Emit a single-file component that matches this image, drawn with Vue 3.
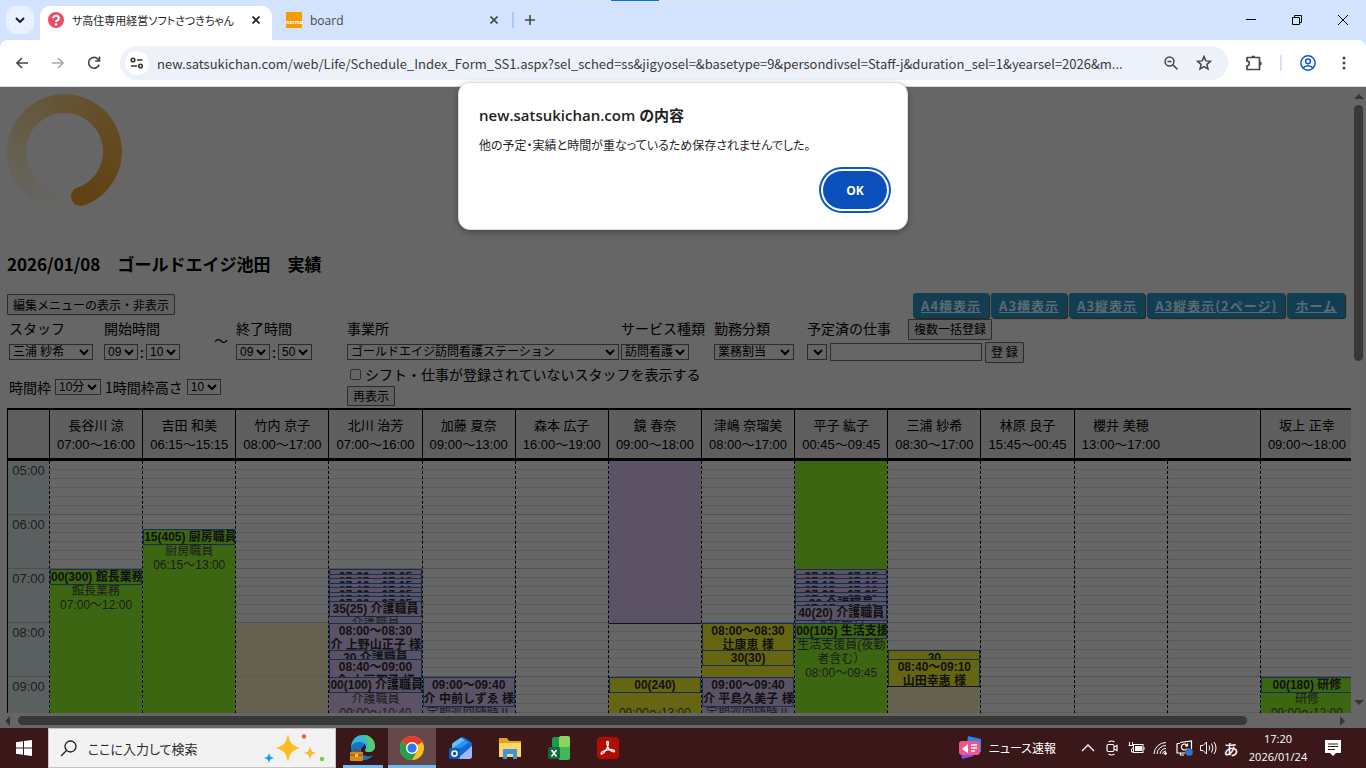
<script setup>
import { ref } from 'vue'

const SLOTS = 28
const PX_PER_MINUTE = 0.9

const url = ref('new.satsukichan.com/web/Life/Schedule_Index_Form_SS1.aspx?sel_sched=ss&jigyosel=&basetype=9&persondivsel=Staff-j&duration_sel=1&yearsel=2026&m...')
const dialogOpen = ref(true)
const search = ref('')

const printLinks = ['A4横表示', 'A3横表示', 'A3縦表示', 'A3縦表示(2ページ)', 'ホーム']
const hours = ['05:00', '06:00', '07:00', '08:00', '09:00']

const heads = [
  { name: '長谷川 涼', time: '07:00～16:00' },
  { name: '吉田 和美', time: '06:15～15:15' },
  { name: '竹内 京子', time: '08:00～17:00' },
  { name: '北川 治芳', time: '07:00～16:00' },
  { name: '加藤 夏奈', time: '09:00～13:00' },
  { name: '森本 広子', time: '16:00～19:00' },
  { name: '鏡 春奈', time: '09:00～18:00' },
  { name: '津嶋 奈瑠美', time: '08:00～17:00' },
  { name: '平子 紘子', time: '00:45～09:45' },
  { name: '三浦 紗希', time: '08:30～17:00' },
  { name: '林原 良子', time: '15:45～00:45' },
  { name: '櫻井 美穂', time: '13:00～17:00', span: 2 },
  { name: '坂上 正幸', time: '09:00～18:00' },
]

// from / to are minutes after 05:00
function ev(from, to, color, title = [], body = []) {
  return { from, to, color, title, body }
}

function shortVisits(count) {
  return Array.from({ length: count }, (_, i) => {
    const a = String(i * 5).padStart(2, '0')
    const b = String(i * 5 + 5).padStart(2, '0')
    return ev(120 + i * 5, 125 + i * 5, 'purple', [`07:${a}～07:${b}`])
  })
}

const lanes = [
  [ev(120, 420, 'green', ['00(300) 館長業務'], ['館長業務', '07:00～12:00'])],
  [ev(75, 480, 'green', ['15(405) 厨房職員'], ['厨房職員', '06:15～13:00'])],
  [ev(180, 480, 'shift')],
  [
    ...shortVisits(7),
    ev(155, 180, 'purple', ['35(25) 介護職員'], ['介護職員']),
    ev(180, 210, 'purple', ['08:00～08:30', '介 上野山正子 様']),
    ev(210, 220, 'purple', ['30 介護職員']),
    ev(220, 240, 'purple', ['08:40～09:00', '介 大戸都子 様']),
    ev(240, 340, 'purple', ['00(100) 介護職員'], ['介護職員', '09:00～10:40']),
  ],
  [ev(240, 290, 'purple', ['09:00～09:40', '介 中前しずゑ 様'], ['定期巡回随時Ⅱ'])],
  [],
  [
    ev(0, 180, 'purple closed'),
    ev(240, 480, 'yellow', ['00(240)'], ['\u00a0', '09:00～13:00']),
  ],
  [
    ev(180, 210, 'yellow', ['08:00～08:30', '辻康恵 様']),
    ev(210, 240, 'yellow', ['30(30)']),
    ev(240, 290, 'purple', ['09:00～09:40', '介 平島久美子 様'], ['定期巡回随時Ⅱ']),
  ],
  [
    ev(0, 120, 'green'),
    ...shortVisits(6),
    ev(150, 155, 'purple', ['30 介護職員']),
    ev(155, 160, 'purple', ['07:35～07:40']),
    ev(160, 180, 'purple', ['40(20) 介護職員'], ['介護職員']),
    ev(180, 285, 'green', ['00(105) 生活支援員'], ['生活支援員(夜勤者含む）', '08:00～09:45']),
  ],
  [
    ev(250, 480, 'shift'),
    ev(210, 220, 'yellow', ['30']),
    ev(220, 250, 'yellow closed', ['08:40～09:10', '山田幸惠 様']),
  ],
  [],
  [],
  [],
  [ev(240, 420, 'green', ['00(180) 研修'], ['研修', '09:00～12:00'])],
]

function place(e) {
  const top = Math.round(e.from * PX_PER_MINUTE)
  const bottom = Math.round(e.to * PX_PER_MINUTE)
  return { top: `${top}px`, height: `${bottom - top + 1}px` }
}
</script>

<template>
  <div class="screen">
    <header class="browser">
      <div class="strip">
        <button class="tab-search" aria-label="タブを検索">
          <svg width="10" height="6" viewBox="0 0 10 6"><path d="M1 1l4 4 4-4" fill="none" stroke="#1f1f1f" stroke-width="2" /></svg>
        </button>
        <div class="tab active">
          <svg width="16" height="16" viewBox="0 0 16 16">
            <circle cx="8" cy="8" r="8" fill="#ec4b64" />
            <path d="M5.2 6.2a2.8 2.5 0 1 1 4 2.2c-.9.5-1.2.8-1.2 1.7" fill="none" stroke="#fff" stroke-width="2" />
            <circle cx="8" cy="12.4" r="1.2" fill="#fff" />
          </svg>
          <span class="tab-title jp">サ高住専用経営ソフトさつきちゃん</span>
          <button class="icon" aria-label="閉じる">
            <svg width="8" height="8" viewBox="0 0 8 8"><path d="M0.5 0.5l7 7M7.5 0.5l-7 7" stroke="#1f1f1f" stroke-width="1.6" /></svg>
          </button>
        </div>
        <div class="tab">
          <span class="favicon">norma</span>
          <span class="tab-title">board</span>
          <button class="icon" aria-label="閉じる">
            <svg width="8" height="8" viewBox="0 0 8 8"><path d="M0.5 0.5l7 7M7.5 0.5l-7 7" stroke="#474747" stroke-width="1.6" /></svg>
          </button>
        </div>
        <i class="bar"></i>
        <button class="icon plus" aria-label="新しいタブ">
          <svg width="10" height="10" viewBox="0 0 10 10"><path d="M5 0v10M0 5h10" stroke="#474747" stroke-width="1.6" /></svg>
        </button>
        <div class="window-buttons">
          <button class="icon" aria-label="最小化"><svg width="10" height="10" viewBox="0 0 10 10"><path d="M0 4.5h10" stroke="#000" /></svg></button>
          <button class="icon" aria-label="元に戻す">
            <svg width="10" height="10" viewBox="0 0 10 10"><path d="M0.5 2.5h7v7h-7zM2.5 2.5v-2h7v7h-2" fill="none" stroke="#000" /></svg>
          </button>
          <button class="icon" aria-label="閉じる"><svg width="10" height="10" viewBox="0 0 10 10"><path d="M0 0l10 10M10 0L0 10" stroke="#000" /></svg></button>
        </div>
      </div>

      <div class="toolbar">
        <button class="icon nav" aria-label="戻る">
          <svg width="12" height="12" viewBox="0 0 12 12"><path d="M12 6H1M6 1L1 6l5 5" fill="none" stroke="#474747" stroke-width="1.6" /></svg>
        </button>
        <button class="icon nav" aria-label="進む">
          <svg width="12" height="12" viewBox="0 0 12 12"><path d="M0 6h11M6 1l5 5-5 5" fill="none" stroke="#a8a8a8" stroke-width="1.6" /></svg>
        </button>
        <button class="icon nav" aria-label="再読み込み">
          <svg width="14" height="14" viewBox="0 0 14 14"><path d="M12.1 8.6A5.4 5.4 0 1 1 11 3.2L12.4 5M12.5 0.6V5H8.1" fill="none" stroke="#474747" stroke-width="1.7" /></svg>
        </button>
        <div class="omnibox">
          <button class="icon site" aria-label="サイト情報">
            <svg width="14" height="12" viewBox="0 0 14 12" fill="none" stroke="#333" stroke-width="1.6"><circle cx="3" cy="3" r="1.8" /><path d="M7 3h5.5M1 9h6" /><circle cx="10.5" cy="9" r="1.8" /></svg>
          </button>
          <input v-model="url" class="url" type="text" aria-label="アドレス" />
          <button class="icon" aria-label="ズーム">
            <svg width="14" height="14" viewBox="0 0 14 14" fill="none" stroke="#474747" stroke-width="1.5"><circle cx="5.5" cy="5.5" r="4.4" /><path d="M8.8 8.8l4.6 4.6M3.5 5.5h4" /></svg>
          </button>
          <button class="icon" aria-label="ブックマーク">
            <svg width="16" height="16" viewBox="0 0 16 16"><path d="M8 1.6l1.8 4.3 4.7.4-3.6 3 1.1 4.6L8 11.5l-4 2.4 1.1-4.6-3.6-3 4.7-.4z" fill="none" stroke="#474747" stroke-width="1.5" /></svg>
          </button>
        </div>
        <button class="icon ext" aria-label="拡張機能">
          <svg width="18" height="18" viewBox="0 0 18 18"><path d="M2 3.5h12.5v12H2v-3.7a2.3 2.3 0 0 0 0-4.6z" fill="none" stroke="#474747" stroke-width="1.7" stroke-linejoin="round" /><path d="M6.2 3.4a2 2 0 0 1 4 0zM14.8 7.5a2 2 0 0 1 0 4z" fill="#474747" /></svg>
        </button>
        <i class="bar"></i>
        <button class="icon ext" aria-label="プロフィール">
          <svg width="16" height="16" viewBox="0 0 16 16" fill="none" stroke="#0b57d0" stroke-width="1.5"><circle cx="8" cy="8" r="7.2" /><circle cx="8" cy="6.3" r="2.4" /><path d="M3 13c2.5-3 7.5-3 10 0" /></svg>
        </button>
        <button class="icon ext" aria-label="メニュー">
          <svg width="4" height="14" viewBox="0 0 4 14" fill="#474747"><circle cx="2" cy="2" r="1.5" /><circle cx="2" cy="7" r="1.5" /><circle cx="2" cy="12" r="1.5" /></svg>
        </button>
      </div>
      <div class="share"><i></i></div>
    </header>

    <main class="viewport">
      <div class="page">
        <div class="spinner"></div>
        <h1>2026/01/08　ゴールドエイジ池田　実績</h1>

        <div class="actions">
          <button class="btn">編集メニューの表示・非表示</button>
          <nav>
            <a v-for="link in printLinks" :key="link" href="#">{{ link }}</a>
          </nav>
        </div>

        <form class="filters" @submit.prevent>
          <div class="left">
            <div class="fields">
              <div class="field staff">
                <label for="staff">スタッフ</label>
                <div class="row"><select id="staff" class="w84"><option>三浦 紗希</option></select></div>
              </div>
              <div class="field time">
                <label for="start-h">開始時間</label>
                <div class="row">
                  <select id="start-h" class="w34"><option>09</option></select>
                  <span class="colon">:</span>
                  <select class="w34" aria-label="開始分"><option>10</option></select>
                </div>
              </div>
              <span class="wave">～</span>
              <div class="field">
                <label for="end-h">終了時間</label>
                <div class="row">
                  <select id="end-h" class="w34"><option>09</option></select>
                  <span class="colon">:</span>
                  <select class="w34" aria-label="終了分"><option>50</option></select>
                </div>
              </div>
            </div>
            <div class="row frame">
              <label for="slot">時間枠</label>
              <select id="slot" class="w46"><option>10分</option></select>
              <label for="height">1時間枠高さ</label>
              <select id="height" class="w34"><option>10</option></select>
            </div>
          </div>

          <div class="right">
            <div class="fields">
              <div class="field office">
                <label for="office">事業所</label>
                <div class="row"><select id="office" class="w272"><option>ゴールドエイジ訪問看護ステーション</option></select></div>
              </div>
              <div class="field kind">
                <label for="service">サービス種類</label>
                <div class="row"><select id="service" class="w68"><option>訪問看護</option></select></div>
              </div>
              <div class="field kind">
                <label for="work">勤務分類</label>
                <div class="row"><select id="work" class="w80"><option>業務割当</option></select></div>
              </div>
              <div class="field">
                <div class="row job">
                  <label for="job">予定済の仕事</label>
                  <button class="btn">複数一括登録</button>
                </div>
                <div class="row gap">
                  <select id="job" class="w20"><option></option></select>
                  <input class="text" type="text" aria-label="仕事の内容" />
                  <button class="btn">登 録</button>
                </div>
              </div>
            </div>
            <label class="check"><input type="checkbox" />シフト・仕事が登録されていないスタッフを表示する</label>
            <button class="btn reload">再表示</button>
          </div>
        </form>

        <table class="schedule">
          <thead>
            <tr>
              <th class="hour-col"></th>
              <th v-for="h in heads" :key="h.name" :colspan="h.span || 1">
                <div :class="{ half: h.span }">{{ h.name }}<br />{{ h.time }}</div>
              </th>
            </tr>
          </thead>
          <tbody>
            <tr>
              <td class="hour-col">
                <div class="hours">
                  <div v-for="h in hours" :key="h" class="hour">{{ h }}</div>
                </div>
              </td>
              <td v-for="(lane, i) in lanes" :key="i">
                <div class="lane">
                  <div v-for="n in SLOTS" :key="n" class="slot"></div>
                  <div v-for="(e, k) in lane" :key="k" class="event" :class="e.color" :style="place(e)">
                    <div v-if="e.title.length" class="event-title">
                      <div v-for="t in e.title" :key="t">{{ t }}</div>
                    </div>
                    <div v-for="t in e.body" :key="t">{{ t }}</div>
                  </div>
                </div>
              </td>
            </tr>
          </tbody>
        </table>
      </div>

      <div class="vscroll">
        <svg width="10" height="5" viewBox="0 0 10 5"><path d="M0 5l5-5 5 5z" fill="#363636" /></svg>
        <div class="vtrack"><div class="vthumb"></div></div>
        <svg width="10" height="5" viewBox="0 0 10 5"><path d="M0 0l5 5 5-5z" fill="#363636" /></svg>
      </div>
      <div class="hscroll">
        <svg width="5" height="10" viewBox="0 0 5 10"><path d="M5 0L0 5l5 5z" fill="#363636" /></svg>
        <div class="htrack"><div class="hthumb"></div></div>
        <svg width="5" height="10" viewBox="0 0 5 10"><path d="M0 0l5 5-5 5z" fill="#363636" /></svg>
      </div>
    </main>

    <div v-if="dialogOpen" class="dialog" role="alertdialog" aria-labelledby="dialog-title">
      <h2 id="dialog-title" class="jp">new.satsukichan.com の内容</h2>
      <p class="jp">他の予定・実績と時間が重なっているため保存されませんでした。</p>
      <button @click="dialogOpen = false">OK</button>
    </div>

    <footer class="taskbar">
      <button class="task start" aria-label="スタート">
        <svg width="16" height="16" viewBox="0 0 16 16" fill="#fff"><path d="M0 2.2l7-1v6.3H0zM8 1.1L16 0v7.5H8zM0 8.5h7v6.3l-7-1zM8 8.5h8V16l-8-1.1z" /></svg>
      </button>
      <label class="search">
        <svg width="17" height="17" viewBox="0 0 17 17" fill="none" stroke="#1a1a1a" stroke-width="1.3"><circle cx="10.5" cy="6.5" r="5.5" /><path d="M6.5 10.5L1 16" /></svg>
        <input v-model="search" class="jp" type="text" placeholder="ここに入力して検索" />
        <svg width="62" height="30" viewBox="0 0 62 30">
          <path d="M24 1c2 9 3 11 12 14-9 3-10 5-12 14-2-9-3-11-12-14 9-3 10-5 12-14z" fill="#fbbc1c" />
          <path d="M46 13c1 5 2 6 6 7-4 1-5 2-6 7-1-5-2-6-6-7 4-1 5-2 6-7z" fill="#fcb92b" />
          <path d="M5 20c1 3 1 4 5 5-4 1-4 2-5 5-1-3-1-4-5-5 4-1 4-2 5-5z" fill="#159cec" />
          <circle cx="40" cy="3.5" r="2.2" fill="#ee6038" /><circle cx="58" cy="26" r="2.2" fill="#80c646" />
        </svg>
      </label>
      <button class="task open edge" aria-label="Edge">
        <svg width="26" height="28" viewBox="0 0 26 28">
          <path d="M13 1C5 1 1 7 1 14c0 7 5 12 12 12 5 0 8-2 10-5-6 3-12 0-12-5 0-2 1-3 3-4z" fill="#1574c8" />
          <path d="M1 13C2 5 7 1 13 1c8 0 12 6 12 11 0 4-3 6-6 6s-4-1-4-2c0-1 1-1 1-3 0-3-3-5-7-5-4 0-7 2-8 5z" fill="#39b7d6" />
          <path d="M14 1c7 0 11 6 11 11 0 4-3 6-6 6s-4-1-4-2c5 0 5-8-1-15z" fill="#50d06d" />
          <path d="M4 18v-2h5v2" fill="none" stroke="#7b4b10" stroke-width="1.5" /><rect x="0" y="18" width="13" height="9" rx="1" fill="#d98a1c" /><path d="M0 21h13" stroke="#7b4b10" /><rect x="5" y="20" width="3" height="3" fill="#f9c650" />
        </svg>
      </button>
      <button class="task open current" aria-label="Chrome">
        <svg width="24" height="24" viewBox="0 0 24 24">
          <circle cx="12" cy="12" r="12" fill="#fbc116" />
          <path d="M12 12L1.6 6A12 12 0 0 1 22.4 6z" fill="#e33b2e" /><path d="M12 0a12 12 0 0 1 10.4 6H12z" fill="#e33b2e" />
          <path d="M1.6 6A12 12 0 0 0 12 24l5.2-9L12 12z" fill="#22a04b" />
          <circle cx="12" cy="12" r="6" fill="#fff" /><circle cx="12" cy="12" r="4.6" fill="#3178e8" />
        </svg>
      </button>
      <button class="task" aria-label="Outlook">
        <svg width="24" height="24" viewBox="0 0 24 24">
          <path d="M3 9a3 3 0 0 1 1.5-2.5L12 1.5a3 3 0 0 1 3 0l7 4.5a3 3 0 0 1 1 2V20a3 3 0 0 1-3 3H3z" fill="#1668d4" />
          <path d="M3 9a3 3 0 0 1 1.5-2.5L12 1.5 16 4 3 13z" fill="#5cc4fb" /><path d="M16 4l4 2.5L3 18v-5z" fill="#2b94f0" />
          <path d="M23 10v10a3 3 0 0 1-3 3H8z" fill="#9db8ff" />
          <rect x="0" y="12" width="11" height="11" rx="2" fill="#1059b8" /><circle cx="5.5" cy="17.5" r="2.6" fill="none" stroke="#fff" stroke-width="1.5" />
        </svg>
      </button>
      <button class="task" aria-label="エクスプローラー">
        <svg width="22" height="22" viewBox="0 0 22 22"><path d="M0 1h8l2 3h12v15H0z" fill="#e5a21b" /><path d="M0 6h22v14H0z" fill="#fcd667" /><path d="M4 12h14v10h-4v-5H8v5H4z" fill="#3c94da" /></svg>
      </button>
      <button class="task" aria-label="Excel">
        <svg width="22" height="24" viewBox="0 0 22 24">
          <path d="M4 4a3 3 0 0 1 3-3h6v22H7a3 3 0 0 1-3-3z" fill="#1c9a52" /><rect x="11" y="0" width="11" height="12" rx="2" fill="#8ed35a" /><path d="M11 11h11v11a2 2 0 0 1-2 2h-9z" fill="#3fb75c" />
          <rect x="0" y="11" width="12" height="12" rx="2" fill="#0e6b3c" /><path d="M3.5 14l5 6.5M8.5 14l-5 6.5" stroke="#fff" stroke-width="1.6" />
        </svg>
      </button>
      <button class="task" aria-label="Acrobat">
        <svg width="22" height="22" viewBox="0 0 22 22"><rect width="22" height="22" rx="4" fill="#b30b00" /><path d="M10.5 4.5c2 0 .8 5-1.5 8.5-2.5 4-5 5-5 3.5s5-4 9-4c3 0 5 .8 4.5 2s-4-.3-5.5-2.5c-2-3-3-7.5-1.5-7.500z" fill="none" stroke="#fff" stroke-width="1.3" /></svg>
      </button>

      <div class="tray">
        <button class="news">
          <svg width="24" height="24" viewBox="0 0 24 24"><path d="M10 0l13 3v13H8z" fill="#1e88ee" /><path d="M2 10l2 13 12-3z" fill="#7b4df0" /><rect x="1" y="5" width="21" height="14" rx="3" fill="#f0568c" /><path d="M4 13l6-5v9z" fill="#fff" /><path d="M13 9h6M13 12h6M13 15h4" stroke="#fff" stroke-width="1.3" /></svg>
          <span class="jp">ニュース速報</span>
        </button>
        <button class="icon" aria-label="隠れているインジケーター"><svg width="14" height="8" viewBox="0 0 14 8"><path d="M1 7l6-6 6 6" fill="none" stroke="#fff" stroke-width="1.3" /></svg></button>
        <button class="icon" aria-label="会議"><svg width="12" height="16" viewBox="0 0 12 16" fill="none" stroke="#fff" stroke-width="1.2"><rect x="1" y="4.5" width="7" height="7" rx="1.5" /><path d="M8 7l3-1.5v5L8 9M2.5 2q3-2 6 0M2.5 14q3 2 6 0" /></svg></button>
        <button class="icon" aria-label="バッテリー"><svg width="17" height="12" viewBox="0 0 17 12"><rect x="5.5" y="2.5" width="9.5" height="8" fill="none" stroke="#fff" /><rect x="7" y="4" width="7" height="5" fill="#fff" /><path d="M16 5v3M1.5 0v3M4.5 0v3M0.5 3.5h5v2l-2 1.5v3h2" fill="none" stroke="#fff" /></svg></button>
        <button class="icon" aria-label="ネットワーク"><svg width="14" height="14" viewBox="0 0 14 14" fill="none" stroke="#fff"><path d="M1 13A12 12 0 0 1 13 1.5M4 13a9 9 0 0 1 9-8.5M7 13a6 6 0 0 1 6-5.5M9.5 13a3.5 3.5 0 0 1 3.5-3" /><circle cx="12.5" cy="12.5" r="1" fill="#fff" /></svg></button>
        <button class="icon" aria-label="更新"><svg width="17" height="16" viewBox="0 0 17 16"><path d="M9 13H4.5v2H8M1 3.5h3M1 3.5V13h3.5M4 2.5L15.5 1v8" fill="none" stroke="#fff" stroke-width="1.2" /><path d="M11 5.5a3 3 0 1 0 0 3M11.5 3.5V6H9" fill="none" stroke="#fff" stroke-width="1.2" /><circle cx="13" cy="12" r="3.8" fill="#3474c4" /></svg></button>
        <button class="icon" aria-label="音量"><svg width="17" height="14" viewBox="0 0 17 14" fill="none" stroke="#fff"><path d="M0.5 4.5H3L6.5 1v12L3 9.5H.5zM9 4.5q1.5 2.5 0 5M11.5 2.5q3 4.5 0 9M14 1q4 6 0 12" /></svg></button>
        <button class="ime">あ</button>
        <div class="clock"><div>17:20</div><div>2026/01/24</div></div>
        <button class="icon note" aria-label="通知"><svg width="16" height="16" viewBox="0 0 16 16"><path d="M0 0h16v13h-5l-3 3-3-3H0z" fill="#fff" /><path d="M3 4h10M3 6.5h10M3 9.5h7" stroke="#3a181a" /></svg></button>
      </div>
    </footer>
  </div>
</template>

<style>
body {
  margin: 0;
}
</style>

<style scoped>
.screen {
  position: relative;
  display: flex;
  flex-direction: column;
  min-height: 100vh;
  font-family: "Open Sans", "Noto Sans CJK JP", sans-serif;
  color: #000;
}

* {
  box-sizing: border-box;
}

button {
  font-family: inherit;
  cursor: pointer;
}

svg {
  display: block;
  flex: none;
}

.jp {
  font-feature-settings: "palt";
}

.icon {
  display: flex;
  align-items: center;
  justify-content: center;
  border: 0;
  padding: 0;
  background: none;
}

/* browser */
.browser {
  position: relative;
  background: #d3e3fd;
}

.strip {
  display: flex;
  align-items: center;
  height: 40px;
  padding-left: 6px;
}

.tab-search {
  display: flex;
  align-items: center;
  justify-content: center;
  width: 28px;
  height: 28px;
  margin-right: 6px;
  border: 0;
  border-radius: 10px;
  background: #e9f0fe;
}

.tab {
  display: flex;
  align-items: center;
  width: 232px;
  height: 34px;
  margin-top: 6px;
  padding: 0 12px 6px 8px;
  gap: 8px;
  font-size: 12px;
  color: #474747;
}

.tab.active {
  background: #fff;
  border-radius: 10px 10px 0 0;
  color: #1f1f1f;
}

.tab.active .tab-title {
  font-size: 11px;
}

.tab:not(.active) {
  width: 240px;
  padding-left: 14px;
  padding-right: 14px;
}

.tab-title {
  flex: 1;
  white-space: nowrap;
}

.favicon {
  width: 16px;
  height: 16px;
  background: #f59b00;
  color: #fff;
  font-size: 5px;
  font-weight: 700;
  line-height: 20px;
  text-align: center;
}

.bar {
  width: 2px;
  height: 16px;
  background: #a8c7fa;
}

.plus {
  margin-left: 11px;
}

.window-buttons {
  display: flex;
  margin-left: auto;
}

.window-buttons .icon {
  width: 46px;
  height: 40px;
}

.toolbar {
  display: flex;
  align-items: center;
  height: 47px;
  padding: 0 4px;
  background: #fff;
  border-bottom: 1px solid #d9dbe0;
  border-radius: 8px 8px 0 0;
}

.nav {
  width: 36px;
  height: 34px;
}

.omnibox {
  display: flex;
  flex: 1;
  align-items: center;
  height: 34px;
  margin: 0 8px;
  padding: 0 16px 0 5px;
  gap: 18px;
  background: #edf1fa;
  border-radius: 17px;
}

.site {
  width: 24px;
  height: 24px;
  border-radius: 50%;
  background: #fff;
}

.url {
  flex: 1;
  min-width: 0;
  margin-left: -10px;
  border: 0;
  padding: 0;
  outline: 0;
  background: none;
  font-family: "Noto Sans CJK JP", sans-serif;
  font-size: 13px;
  color: #3a3a3a;
}

.ext {
  width: 36px;
}

.toolbar .bar {
  margin: 0 8px;
  background: #d3e3fd;
}

.share {
  position: absolute;
  top: 0;
  left: 50%;
  width: 240px;
  height: 1px;
  margin-left: -120px;
  background: #e4e4e4;
}

.share i {
  display: block;
  width: 48px;
  height: 1px;
  margin-left: 48px;
  background: #0078d4;
}

/* page */
.viewport {
  display: grid;
  flex: 1;
  grid-template-columns: minmax(0, 1fr) 15px;
  grid-template-rows: 1fr 15px;
  background: #666;
}

.page {
  overflow: hidden;
  padding: 7px 0 0 7px;
  font-family: "Noto Sans CJK JP", sans-serif;
  font-size: 14px;
}

.spinner {
  position: relative;
  width: 115px;
  height: 115px;
}

.spinner::before {
  content: "";
  display: block;
  width: 115px;
  height: 115px;
  border-radius: 50%;
  background: conic-gradient(from 180deg, #666 0deg, #66635c 40deg, #66604f 90deg, #65563a 160deg, #634b22 250deg, #604212 340deg, transparent 340deg);
  mask: radial-gradient(circle, transparent 38px, #000 39px);
}

.spinner::after {
  content: "";
  position: absolute;
  left: 64px;
  top: 93px;
  width: 19px;
  height: 19px;
  border-radius: 50%;
  background: #604212;
}

h1 {
  margin: 43px 0 17px;
  font-size: 17px;
  line-height: 24px;
}

.actions {
  display: flex;
  justify-content: space-between;
  height: 25px;
  padding-right: 6px;
}

.actions .btn {
  margin-top: 1px;
}

.actions nav {
  display: flex;
  gap: 2px;
}

.actions a {
  height: 25px;
  padding: 0 8px;
  border-radius: 3px;
  background: #133e52;
  box-shadow: 1px 1px 1px #222;
  color: #5b6b74;
  font-size: 13px;
  font-weight: 700;
  letter-spacing: 1px;
  line-height: 26px;
}

.btn {
  height: 21px;
  padding: 0 5px;
  border: 1px solid #2c2c2c;
  border-radius: 1px;
  background: #606060;
  color: #000;
  font-size: 12px;
  line-height: 18px;
  white-space: nowrap;
}

.filters {
  display: flex;
  height: 90px;
}

.left {
  width: 340px;
  padding-left: 2px;
}

.fields {
  display: flex;
  height: 45px;
}

.field label {
  display: block;
  height: 22px;
  line-height: 20px;
}

.row {
  display: flex;
  align-items: center;
  height: 22px;
}

.field > .row:last-child {
  height: 24px;
}

.staff {
  width: 95px;
}

.time {
  width: 110px;
}

.wave {
  width: 22px;
  line-height: 44px;
}

.colon {
  width: 8px;
  text-align: center;
}

.office {
  width: 274px;
}

.kind {
  width: 93px;
  white-space: nowrap;
}

.job {
  gap: 17px;
}

.gap {
  gap: 3px;
}

.frame {
  margin-top: 13px;
  gap: 4px;
}

select {
  appearance: none;
  height: 16px;
  border: 1px solid #2c2c2c;
  border-radius: 0;
  padding: 0 3px;
  background: #666 url("data:image/svg+xml,%3Csvg xmlns='http://www.w3.org/2000/svg' width='10' height='7' viewBox='0 0 10 7'%3E%3Cpath d='M1 1l4 4 4-4' fill='none' stroke='%23000' stroke-width='2'/%3E%3C/svg%3E") no-repeat right 3px center;
  color: #000;
  font-family: "Liberation Sans", "Noto Sans CJK JP", sans-serif;
  font-size: 12px;
  line-height: 14px;
}

.w20 { width: 20px; }
.w34 { width: 34px; }
.w46 { width: 46px; }
.w68 { width: 68px; }
.w80 { width: 80px; }
.w84 { width: 84px; }
.w272 { width: 272px; }

.text {
  width: 152px;
  height: 18px;
  border: 1px solid #2c2c2c;
  background: #666;
}

.check {
  display: flex;
  align-items: center;
  height: 22px;
  margin-bottom: 1px;
}

.check input {
  appearance: none;
  width: 11px;
  height: 11px;
  margin: 0 4px 0 3px;
  border: 1px solid #303030;
  border-radius: 2px;
}

.reload {
  display: block;
  height: 20px;
}

/* schedule */
.schedule {
  width: calc(100% + 2px);
  table-layout: fixed;
  border-spacing: 0;
  font-family: "Liberation Sans", "Noto Sans CJK JP", sans-serif;
  font-size: 13px;
}

.schedule th {
  height: 53px;
  padding: 2px 0 0;
  border-top: 2px solid #000;
  border-bottom: 3px solid #000;
  border-left: 1px solid #000;
  background: #5e5e5e;
  font-weight: 400;
  line-height: 19px;
  white-space: nowrap;
}

.schedule td {
  padding: 0;
  border-left: 1px dashed #000;
  vertical-align: top;
}

.half {
  width: 50%;
}

.schedule .hour-col {
  width: 42px;
  border-left: 1px solid #000;
}

td.hour-col {
  background: #5a6060;
}

.hours,
.lane {
  position: relative;
  height: 252px;
  overflow: hidden;
}

.hour {
  height: 54px;
  border-bottom: 1px solid #4c4f4f;
  color: #1c1c1c;
  line-height: 19px;
  text-align: center;
}

.slot {
  height: 9px;
  border-bottom: 1px dotted #525252;
}

.slot:nth-child(6n) {
  border-bottom: 1px solid #505050;
}

.event {
  position: absolute;
  left: 0;
  right: 0;
  overflow: hidden;
  color: #1c1c1c;
  font-size: 12px;
  line-height: 14px;
  text-align: center;
}

.event-title {
  overflow: hidden;
  margin-bottom: -1px;
  border: 1px solid #152f52;
  color: #111;
  font-weight: 700;
  white-space: nowrap;
}

.green { background: #3c6611; }
.purple { background: #5c5265; }
.yellow { background: #666612; }
.shift { background: rgba(101, 97, 73, 0.7); }
.closed { border-bottom: 1px solid #111; }

/* scrollbars */
.vscroll {
  display: flex;
  flex-direction: column;
  align-items: center;
  padding: 7px 0 8px;
}

.vtrack {
  flex: 1;
  width: 9px;
  padding-top: 6px;
}

.vthumb {
  height: 43%;
  border-radius: 5px;
  background: #383838;
}

.hscroll {
  display: flex;
  align-items: center;
  padding: 0 6px 0 5px;
}

.htrack {
  flex: 1;
  padding-left: 8px;
}

.hthumb {
  width: 93%;
  height: 9px;
  border-radius: 5px;
  background: #383838;
}

/* alert */
.dialog {
  position: absolute;
  top: 82px;
  left: 50%;
  display: flex;
  flex-direction: column;
  width: 450px;
  height: 148px;
  padding: 21px 20px 20px;
  transform: translateX(-50%);
  border: 1px solid #dcdde0;
  border-radius: 12px;
  background: #fff;
  box-shadow: 0 2px 6px rgba(0, 0, 0, 0.3);
  color: #1f1f1f;
}

.dialog h2 {
  margin: 0;
  font-size: 15px;
  font-weight: 600;
  line-height: 22px;
}

.dialog p {
  margin: 10px 0 0;
  font-size: 12px;
  line-height: 20px;
}

.dialog button {
  align-self: flex-end;
  width: 64px;
  height: 38px;
  margin-top: auto;
  border: 0;
  border-radius: 19px;
  background: #0b4fbd;
  box-shadow: 0 0 0 2px #fff, 0 0 0 4px #0b57d0;
  color: #fff;
  font-size: 12px;
  font-weight: 700;
}

/* taskbar */
.taskbar {
  display: flex;
  height: 40px;
  background: #3a181a;
  color: #fff;
}

.task {
  display: flex;
  align-items: center;
  justify-content: center;
  width: 49px;
  border: 0;
  padding: 0;
  background: none;
}

.start {
  width: 48px;
}

.open {
  border-bottom: 3px solid #76b9ed;
  padding-top: 3px;
}

.edge {
  width: 40px;
  margin: 0 5px 0 7px;
}

.current {
  width: 48px;
  background-color: #66484a;
}

.search {
  display: flex;
  align-items: center;
  width: 288px;
  padding: 0 9px 0 11px;
  gap: 11px;
  border: 1px solid #c9c4c4;
  background: #f3f2f2;
}

.search input {
  flex: 1;
  min-width: 0;
  border: 0;
  padding: 0;
  outline: 0;
  background: none;
  font-family: "Noto Sans CJK JP", sans-serif;
  font-size: 13px;
}

.search input::placeholder {
  color: #2b2b2b;
}

.tray {
  display: flex;
  align-items: center;
  margin-left: auto;
  padding-right: 20px;
}

.tray .icon {
  width: 24px;
  height: 40px;
}

.news {
  display: flex;
  align-items: center;
  gap: 7px;
  margin-right: 20px;
  border: 0;
  padding: 0;
  background: none;
  color: #fff;
  font-size: 12px;
}

.ime {
  width: 22px;
  border: 0;
  padding: 0;
  background: none;
  color: #fff;
  font-size: 15px;
  font-weight: 500;
}

.clock {
  width: 72px;
  font-family: "Open Sans", sans-serif;
  font-size: 11px;
  line-height: 18px;
  text-align: center;
}

.tray .note {
  width: 32px;
  padding-left: 6px;
}
</style>
